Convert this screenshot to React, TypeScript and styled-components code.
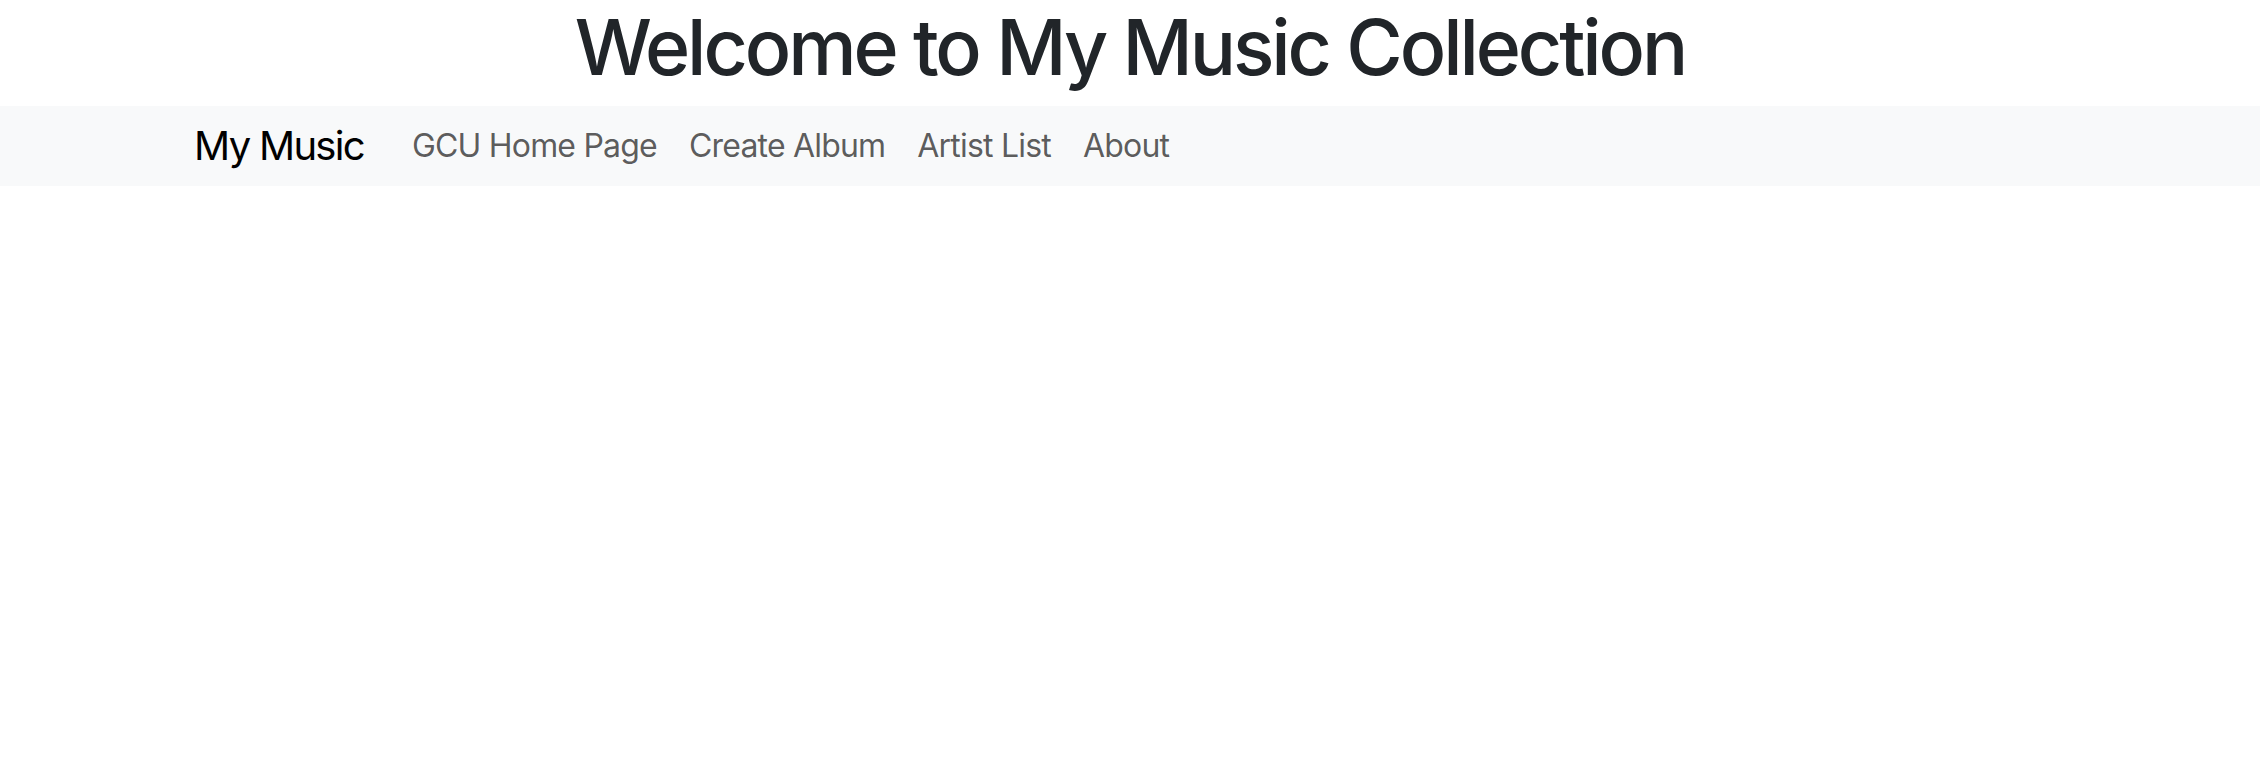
import React from "react";
import styled, { createGlobalStyle } from "styled-components";

const GlobalStyle = createGlobalStyle`
  html, body {
    margin: 0;
    padding: 0;
    background: #ffffff;
  }
  body {
    font-family: Inter, "Noto Sans", "Liberation Sans", sans-serif;
    color: #212529;
    -webkit-font-smoothing: antialiased;
  }
`;

const Page = styled.div`
  display: flex;
  flex-direction: column;
`;

const Title = styled.h1`
  margin: 0 0 12px;
  font-size: 77px;
  font-weight: 500;
  line-height: 94px;
  letter-spacing: -3.1px;
  text-align: center;
  color: #212529;
`;

const NavBar = styled.nav`
  background: #f8f9fa;
  height: 80px;
  display: flex;
  align-items: center;
`;

const Container = styled.div`
  width: 100%;
  max-width: 1920px;
  margin: 0 auto;
  padding: 0 24px;
  box-sizing: border-box;
  display: flex;
  align-items: center;
`;

const Brand = styled.a`
  font-size: 40px;
  line-height: 60px;
  padding: 10px 0;
  margin-right: 32px;
  color: #000;
  text-decoration: none;
  white-space: nowrap;
  letter-spacing: -1.7px;
`;

const NavList = styled.ul`
  display: flex;
  list-style: none;
  margin: 0;
  padding: 0;
`;

const NavLink = styled.a`
  display: block;
  padding: 16px 16px;
  font-size: 32px;
  line-height: 48px;
  color: rgba(0, 0, 0, 0.65);
  text-decoration: none;
  white-space: nowrap;
  letter-spacing: -0.8px;
`;

const links = ["GCU Home Page", "Create Album", "Artist List", "About"];

export default function App() {
  return (
    <Page>
      <GlobalStyle />
      <Title>Welcome to My Music Collection</Title>
      <NavBar>
        <Container>
          <Brand href="#">My Music</Brand>
          <NavList>
            {links.map((l) => (
              <li key={l}>
                <NavLink href="#">{l}</NavLink>
              </li>
            ))}
          </NavList>
        </Container>
      </NavBar>
    </Page>
  );
}
